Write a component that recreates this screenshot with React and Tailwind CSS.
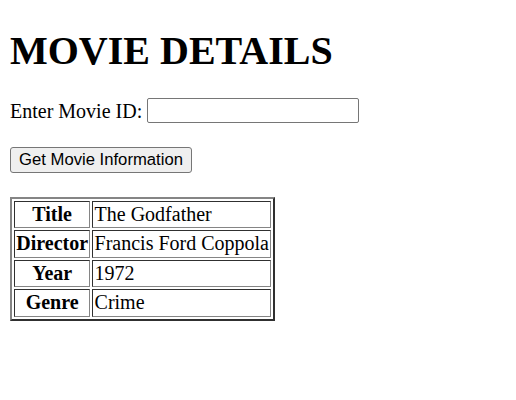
const movie = [
  ["Title", "The Godfather"],
  ["Director", "Francis Ford Coppola"],
  ["Year", "1972"],
  ["Genre", "Crime"],
]

export default function App() {
  return (
    <div className="m-[10px] font-['Liberation_Serif',serif] text-[20px] leading-[normal] text-black">
      <h1 className="mt-[26.8px] mb-[23.8px] text-[40px] font-bold leading-[normal]">MOVIE DETAILS</h1>

      <p className="mt-0 mb-[24px]">
        Enter Movie ID:{" "}
        <input
          type="text"
          className="h-[25px] w-[212px] rounded-[2px] border border-[#767676] bg-white px-[2px] align-bottom"
        />
      </p>

      <p className="mt-0 mb-[24px]">
        <button className="h-[26px] w-[182px] rounded-[3px] border border-[#767676] bg-[#efefef] font-['Liberation_Sans',Arial,sans-serif] text-[16.67px] leading-[normal] text-black">
          Get Movie Information
        </button>
      </p>

      <table className="border-separate border-spacing-[2.5px] border-2 border-t-[#858585] border-l-[#858585] border-r-[#303030] border-b-[#303030]">
        <tbody>
          {movie.map(([label, value]) => (
            <tr key={label}>
              <th className="border border-t-[#303030] border-l-[#303030] border-r-[#858585] border-b-[#858585] p-[1.25px] text-center font-bold">
                {label}
              </th>
              <td className="border border-t-[#303030] border-l-[#303030] border-r-[#858585] border-b-[#858585] p-[1.25px]">
                {value}
              </td>
            </tr>
          ))}
        </tbody>
      </table>
    </div>
  )
}
